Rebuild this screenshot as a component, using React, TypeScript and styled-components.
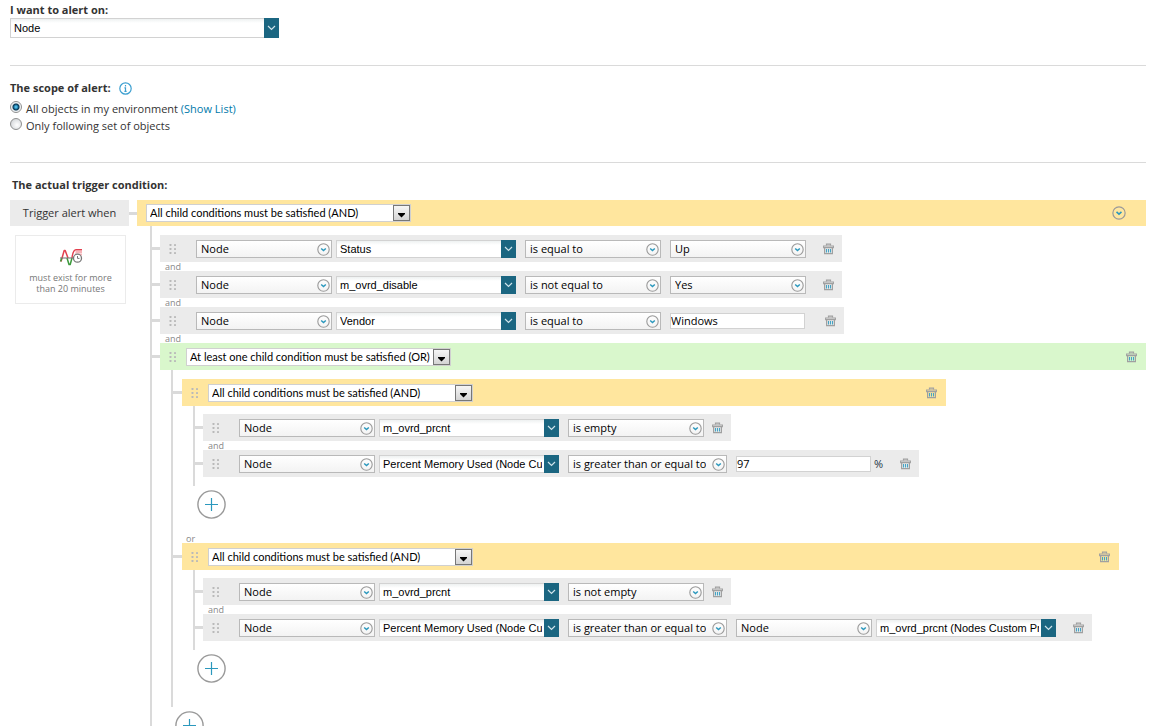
import React from "react";
import styled, { createGlobalStyle, css } from "styled-components";

const GlobalStyle = createGlobalStyle`
  *, *::before, *::after { box-sizing: border-box; }
  html, body, #root { height: 100%; }
  body {
    margin: 0;
    background: #fff;
    color: #333;
    font: 11px/16px "Open Sans", "Noto Sans", sans-serif;
  }
  button, select, input { font: inherit; color: inherit; margin: 0; }
`;

const Page = styled.main`
  height: 100%;
  overflow: auto;
  scrollbar-width: none;
  padding: 2px 13px 0 10px;
`;

const Section = styled.section`
  padding-bottom: 27px;
  border-bottom: 1px solid #dadada;
  margin-bottom: 14px;
`;

const titleStyle = css`
  display: flex;
  align-items: center;
  gap: 8px;
  margin: 0;
  font-size: 11px;
  line-height: 16px;
  font-weight: 700;
`;

const TitleLabel = styled.label`
  ${titleStyle}
`;

const Title = styled.h2<{ $indent?: number }>`
  ${titleStyle}
  padding-left: ${(p) => p.$indent ?? 0}px;
`;

/* Drop-downs: the native select and its decoration share one grid cell. */
const SelectFrame = styled.span<{ $width: number; $height?: number }>`
  display: inline-grid;
  flex: none;
  width: ${(p) => p.$width}px;
  height: ${(p) => p.$height ?? 18}px;
  > * { grid-area: 1 / 1; }
  > :not(select) { justify-self: end; align-self: center; pointer-events: none; }
`;

const selectReset = css`
  appearance: none;
  width: 100%;
  height: 100%;
  border-radius: 0;
  outline: 0;
  color: #000;
`;

const PlainSelect = styled.select`
  ${selectReset}
  border: 1px solid #b9b9b9;
  background: linear-gradient(#fff, #f3f3f3);
  padding: 0 20px 0 4px;
`;

const ComboSelect = styled.select`
  ${selectReset}
  border: 1px solid #d2d2d2;
  background: linear-gradient(#eef1f1, #fff 4px);
  padding: 0 16px 0 3px;
  font-family: "Liberation Sans", Arial, sans-serif;
`;

const GroupSelect = styled.select`
  ${selectReset}
  border: 1px solid #d0d0d0;
  background: #fff;
  padding: 0 18px 0 3px;
  font-family: Lato, Tahoma, sans-serif;
`;

const ComboTrigger = styled.span`
  display: grid;
  place-items: center;
  width: 15px;
  height: 100%;
  background: #1b6681;
`;

const BoxTrigger = styled.span`
  display: grid;
  place-items: center;
  width: 17px;
  height: 16px;
  margin-right: 1px;
  border: 1px solid #777;
  background: linear-gradient(#f6f6f6, #d4d4d4);
`;

const RoundTrigger = styled.span`
  display: grid;
  margin-right: 2px;
`;

const IconButton = styled.button`
  display: grid;
  place-items: center;
  flex: none;
  padding: 0;
  border: 0;
  background: none;
  cursor: pointer;
`;

const TextInput = styled.input`
  flex: none;
  width: 135px;
  height: 16px;
  padding: 0;
  border: 1px solid #d2d2d2;
  background: #fff;
  color: #000;
`;

const RadioList = styled.div`
  padding-top: 5px;
`;

const RadioRow = styled.div`
  display: flex;
  align-items: flex-start;
  height: 17px;
  gap: 4px;
`;

const Radio = styled.input`
  appearance: none;
  flex: none;
  width: 12px;
  height: 12px;
  border: 1px solid #8e8f8f;
  border-radius: 50%;
  background: radial-gradient(circle at 60% 60%, #fff, #c9cdd1);
  &:checked {
    background: radial-gradient(circle at 50% 50%, #4fb8e4 0 1px, #17709b 2px, #0b3550 3px, #dfe6ea 4px, #fff 5px);
  }
`;

const RadioText = styled.span`
  line-height: 16px;
  white-space: nowrap;
`;

const Link = styled.a`
  color: #0079aa;
  text-decoration: none;
`;

const Builder = styled.div`
  display: flex;
  align-items: flex-start;
  margin-top: 7px;
`;

const Aside = styled.div`
  flex: none;
  width: 119px;
`;

const TriggerLabel = styled.div`
  height: 26px;
  line-height: 26px;
  text-align: center;
  background: #ebebeb;
`;

const DurationCard = styled.div`
  display: flex;
  flex-direction: column;
  align-items: center;
  gap: 6px;
  margin: 9px 3px 0 5px;
  padding: 12px 0 9px;
  border: 1px solid #ebebeb;
  color: #777;
  font-size: 9px;
  line-height: 11px;
  text-align: center;
`;

const Stub = styled.span<{ $wide?: boolean }>`
  flex: none;
  width: ${(p) => (p.$wide ? 9 : 8)}px;
  height: 3px;
  margin-top: 12px;
  background: #dadada;
`;

const GroupBox = styled.div<{ $root?: boolean }>`
  display: flex;
  flex-direction: column;
  ${(p) => (p.$root ? "flex: 1;" : "padding-bottom: 15px;")}
`;

const GroupBar = styled.div<{ $kind: "and" | "or"; $root?: boolean }>`
  display: flex;
  align-items: center;
  height: ${(p) => (p.$root ? 26 : 27)}px;
  padding: ${(p) => (p.$root ? "0 20px 0 9px" : "0 9px 0 9px")};
  gap: 10px;
  background: ${(p) => (p.$kind === "and" ? "#ffe69e" : "#d9f7cc")};
  > :last-child { margin-left: auto; }
`;

const Branch = styled.div<{ $root?: boolean; $kind: "and" | "or" }>`
  display: flex;
  flex-direction: column;
  align-items: flex-start;
  margin: ${(p) => (p.$root ? "0 0 0 13px" : "0 27px 0 11px")};
  padding-top: ${(p) => (p.$root || p.$kind === "or" ? 9 : 8)}px;
  border-left: 2px solid #dadada;
`;

const Item = styled.div`
  display: flex;
  align-items: flex-start;
`;

const Joint = styled.div`
  height: 9px;
  padding-left: 13px;
  color: #888;
  font-size: 9px;
  line-height: 9px;
`;

const Row = styled.div`
  display: flex;
  align-items: center;
  height: 27px;
  padding: 1px 8px 0 9px;
  background: #ebebeb;
`;

const Fields = styled.div`
  display: flex;
  align-items: center;
  gap: 9px;
  margin-left: 20px;
`;

const FieldPair = styled.div`
  display: flex;
  gap: 4px;
`;

const Measure = styled.div`
  display: flex;
  align-items: center;
  gap: 3px;
`;

const Unit = styled.span`
  width: 12px;
  color: #234;
`;

const RowDelete = styled(IconButton)<{ $gap: number }>`
  margin-left: ${(p) => p.$gap}px;
`;

const AddButton = styled(IconButton)`
  width: 29px;
  height: 29px;
  margin: 4px 0 0 15px;
`;

const RoundChevron = ({ size = 13 }: { size?: number }) => (
  <svg width={size} height={size} viewBox="0 0 13 13" fill="none" aria-hidden="true">
    <circle cx="6.5" cy="6.5" r="5.7" stroke="#999" strokeWidth="1.1" />
    <path d="M4.2 5.5 6.5 7.5 8.800 5.500" stroke="#2b98bd" strokeWidth="1.5" />
  </svg>
);

const Chevron = () => (
  <svg width="9" height="6" viewBox="0 0 9 6" fill="none" aria-hidden="true">
    <path d="M1 1 4.5 4.4 8 1" stroke="#cfe3ea" strokeWidth="1.2" />
  </svg>
);

const Arrow = () => (
  <svg width="7" height="10" viewBox="0 0 7 10" aria-hidden="true">
    <path d="M0 5h7v1L3.500 9.500 0 6z" fill="#000" />
  </svg>
);

const Trash = () => (
  <svg width="11" height="12" viewBox="0 0 11 12" fill="none" aria-hidden="true">
    <path d="M3.500 2.500V1.200h4v1.300" stroke="#a0a0a0" strokeWidth="1.2" />
    <path d="M.6 4.600V3h9.800v1.600z" stroke="#a0a0a0" strokeWidth="1.1" />
    <path d="M1.600 4.600v6h7.800v-6" stroke="#a0a0a0" strokeWidth="1.2" />
    <path d="M3.500 6v3.600M5.500 6v3.600M7.500 6v3.600" stroke="#45a3c4" strokeWidth="1.1" />
  </svg>
);

const Grip = () => (
  <svg width="7" height="10" viewBox="0 0 7 10" fill="#b9b9b9" aria-hidden="true">
    {[0, 4, 8].map((y) => (
      <React.Fragment key={y}>
        <rect x="0.500" y={y} width="2" height="2" rx=".4" />
        <rect x="5" y={y} width="2" height="2" rx=".4" />
      </React.Fragment>
    ))}
  </svg>
);

const Info = () => (
  <svg width="13" height="13" viewBox="0 0 13 13" fill="none" stroke="#3c9fd0" aria-hidden="true">
    <circle cx="6.5" cy="6.5" r="5.7" strokeWidth="1.2" />
    <path d="M6.5 3v1.4M5.4 5.8h1.1v3.6M5.4 9.4h2.200" strokeWidth="1.2" />
  </svg>
);

const Plus = () => (
  <svg width="29" height="29" viewBox="0 0 29 29" fill="none" aria-hidden="true">
    <circle cx="14.5" cy="14.5" r="13.600" stroke="#999" strokeWidth="1.4" />
    <path d="M14.5 8v13M8 14.5h13" stroke="#2b98bd" strokeWidth="1.2" />
  </svg>
);

const DurationIcon = () => (
  <svg width="24" height="18" viewBox="0 0 24 18" fill="none" aria-hidden="true">
    <path d="M16.500 4h6.500M16 6.500h7" stroke="#f6b3b8" strokeWidth="2" />
    <path d="M2 13.500 5.200 2.500h1L9 10" stroke="#e2404f" strokeWidth="1.500" strokeLinejoin="round" />
    <path d="M8 10 10 16.500h1.200L13 10" stroke="#3c9a3c" strokeWidth="1.500" strokeLinejoin="round" />
    <path d="M1.500 13.500 2.800 10" stroke="#3c9a3c" strokeWidth="1.500" />
    <path d="M13 10c.6-5 1.500-8.300 4-8.300h6" stroke="#e2404f" strokeWidth="1.4" />
    <path d="M1 10h13" stroke="#777" strokeWidth="1.1" />
    <circle cx="18.500" cy="10.200" r="4" fill="#fff" stroke="#777" strokeWidth="1.3" />
    <path d="M18.500 8v2.400h2" stroke="#777" />
  </svg>
);

type FieldProps = { label: string; value: string; width?: number };

const Plain = ({ label, value, width = 136 }: FieldProps) => (
  <SelectFrame $width={width}>
    <PlainSelect aria-label={label} defaultValue={value}>
      <option>{value}</option>
    </PlainSelect>
    <RoundTrigger><RoundChevron /></RoundTrigger>
  </SelectFrame>
);

const Combo = ({ label, value }: FieldProps) => (
  <SelectFrame $width={180}>
    <ComboSelect aria-label={label} defaultValue={value}>
      <option>{value}</option>
    </ComboSelect>
    <ComboTrigger><Chevron /></ComboTrigger>
  </SelectFrame>
);

type Value =
  | { type: "choice"; text: string }
  | { type: "text"; text: string }
  | { type: "measure"; text: string; unit: string }
  | { type: "field"; object: string; field: string };

type ConditionNode = {
  type: "condition";
  object: string;
  field: string;
  operator: string;
  value?: Value;
};

type GroupNode = { type: "group"; kind: "and" | "or"; children: TreeNode[] };
type TreeNode = ConditionNode | GroupNode;

const TREE: GroupNode = {
  type: "group",
  kind: "and",
  children: [
    { type: "condition", object: "Node", field: "Status", operator: "is equal to", value: { type: "choice", text: "Up" } },
    { type: "condition", object: "Node", field: "m_ovrd_disable", operator: "is not equal to", value: { type: "choice", text: "Yes" } },
    { type: "condition", object: "Node", field: "Vendor", operator: "is equal to", value: { type: "text", text: "Windows" } },
    {
      type: "group",
      kind: "or",
      children: [
        {
          type: "group",
          kind: "and",
          children: [
            { type: "condition", object: "Node", field: "m_ovrd_prcnt", operator: "is empty" },
            {
              type: "condition",
              object: "Node",
              field: "Percent Memory Used (Node Current)",
              operator: "is greater than or equal to",
              value: { type: "measure", text: "97", unit: "%" },
            },
          ],
        },
        {
          type: "group",
          kind: "and",
          children: [
            { type: "condition", object: "Node", field: "m_ovrd_prcnt", operator: "is not empty" },
            {
              type: "condition",
              object: "Node",
              field: "Percent Memory Used (Node Current)",
              operator: "is greater than or equal to",
              value: { type: "field", object: "Node", field: "m_ovrd_prcnt (Nodes Custom Properties)" },
            },
          ],
        },
      ],
    },
  ],
};

const ValueField = ({ value }: { value: Value }) => {
  switch (value.type) {
    case "choice":
      return <Plain label="Value" value={value.text} />;
    case "text":
      return <TextInput aria-label="Value" defaultValue={value.text} />;
    case "measure":
      return (
        <Measure>
          <TextInput aria-label="Value" defaultValue={value.text} />
          <Unit>{value.unit}</Unit>
        </Measure>
      );
    case "field":
      return (
        <FieldPair>
          <Plain label="Value object" value={value.object} />
          <Combo label="Value field" value={value.field} />
        </FieldPair>
      );
  }
};

const DELETE_GAP = { none: 8, choice: 17, field: 17, text: 20, measure: 14 };

const Condition = ({ node }: { node: ConditionNode }) => (
  <Row>
    <Grip />
    <Fields>
      <FieldPair>
        <Plain label="Object" value={node.object} />
        <Combo label="Field" value={node.field} />
      </FieldPair>
      <Plain label="Operator" value={node.operator} width={node.operator.length > 20 ? 159 : 136} />
      {node.value && <ValueField value={node.value} />}
    </Fields>
    <RowDelete $gap={DELETE_GAP[node.value?.type ?? "none"]} aria-label="Delete condition">
      <Trash />
    </RowDelete>
  </Row>
);

const LABELS = {
  and: "All child conditions must be satisfied (AND)",
  or: "At least one child condition must be satisfied (OR)",
};

const Group = ({ node, root }: { node: GroupNode; root?: boolean }) => (
  <GroupBox $root={root}>
    <GroupBar $kind={node.kind} $root={root}>
      {!root && <Grip />}
      <SelectFrame $width={265}>
        <GroupSelect aria-label="Group operator" defaultValue={LABELS[node.kind]}>
          <option>{LABELS.and}</option>
          <option>{LABELS.or}</option>
        </GroupSelect>
        <BoxTrigger><Arrow /></BoxTrigger>
      </SelectFrame>
      {root ? (
        <IconButton aria-label="Collapse"><RoundChevron size={14} /></IconButton>
      ) : (
        <IconButton aria-label="Delete group"><Trash /></IconButton>
      )}
    </GroupBar>
    <Branch $root={root} $kind={node.kind}>
      {node.children.map((child, i) => (
        <React.Fragment key={i}>
          <Item>
            <Stub $wide={node.kind === "or"} />
            {child.type === "group" ? <Group node={child} /> : <Condition node={child} />}
          </Item>
          <Joint>{i < node.children.length - 1 ? node.kind : null}</Joint>
        </React.Fragment>
      ))}
    </Branch>
    <AddButton aria-label="Add condition"><Plus /></AddButton>
  </GroupBox>
);

export default function App() {
  return (
    <>
      <GlobalStyle />
      <Page>
        <Section>
          <TitleLabel htmlFor="alert-on">I want to alert on:</TitleLabel>
          <SelectFrame $width={269} $height={20}>
            <ComboSelect id="alert-on" defaultValue="Node">
              <option>Node</option>
            </ComboSelect>
            <ComboTrigger><Chevron /></ComboTrigger>
          </SelectFrame>
        </Section>
        <Section>
          <Title>
            The scope of alert:
            <IconButton aria-label="About the scope"><Info /></IconButton>
          </Title>
          <RadioList>
            <RadioRow>
              <Radio type="radio" name="scope" id="scope-all" defaultChecked />
              <RadioText>
                <label htmlFor="scope-all">All objects in my environment</label> <Link href="#list">(Show List)</Link>
              </RadioText>
            </RadioRow>
            <RadioRow>
              <Radio type="radio" name="scope" id="scope-set" />
              <RadioText>
                <label htmlFor="scope-set">Only following set of objects</label>
              </RadioText>
            </RadioRow>
          </RadioList>
        </Section>
        <Title $indent={2}>The actual trigger condition:</Title>
        <Builder>
          <Aside>
            <TriggerLabel>Trigger alert when</TriggerLabel>
            <DurationCard>
              <DurationIcon />
              <span>
                must exist for more
                <br />
                than 20 minutes
              </span>
            </DurationCard>
          </Aside>
          <Stub />
          <Group node={TREE} root />
        </Builder>
      </Page>
    </>
  );
}
